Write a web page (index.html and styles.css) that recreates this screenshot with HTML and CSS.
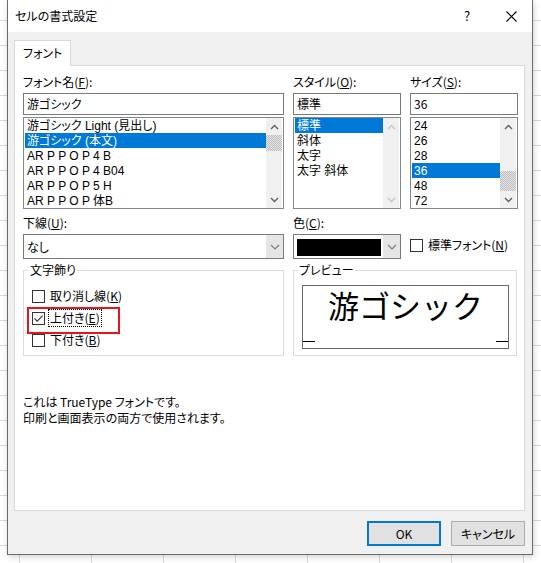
FILE: index.html
```html
<!DOCTYPE html>
<html lang="ja">
<head>
<meta charset="utf-8">
<title>セルの書式設定</title>
<link rel="stylesheet" href="styles.css">
</head>
<body>
<div class="dialog">
  <div class="titlebar">
    <span class="title">セルの書式設定</span>
    <span class="help">?</span>
    <span class="close"><svg width="11" height="11" viewBox="0 0 11 11"><path d="M0.5 0.5 L10.5 10.5 M10.5 0.5 L0.5 10.5" stroke="#000" stroke-width="1.1" fill="none"/></svg></span>
  </div>
  <div class="body">
    <div class="tabs"><div class="tab">フォント</div></div>
    <div class="panel">
      <div class="top">
        <div class="col">
          <div class="label">フォント名(<u>F</u>):</div>
          <div class="input">游ゴシック</div>
          <div class="list">
            <div class="items">
              <div class="item">游ゴシック Light (見出し)</div>
              <div class="item sel">游ゴシック (本文)</div>
              <div class="item">AR P P O P 4 B</div>
              <div class="item">AR P P O P 4 B04</div>
              <div class="item">AR P P O P 5 H</div>
              <div class="item">AR P P O P 体B</div>
            </div>
            <div class="sbar">
              <div class="arrow"><svg width="9" height="6" viewBox="0 0 9 6"><path d="M1 5 L4.5 1.5 L8 5" stroke="#606060" stroke-width="1.4" fill="none"/></svg></div>
              <div class="track"><div class="thumb thumb-top"></div></div>
              <div class="arrow"><svg width="9" height="6" viewBox="0 0 9 6"><path d="M1 1 L4.5 4.5 L8 1" stroke="#606060" stroke-width="1.4" fill="none"/></svg></div>
            </div>
          </div>
        </div>
        <div class="col">
          <div class="label">スタイル(<u>O</u>):</div>
          <div class="input">標準</div>
          <div class="list">
            <div class="items">
              <div class="item sel">標準</div>
              <div class="item">斜体</div>
              <div class="item">太字</div>
              <div class="item">太字 斜体</div>
            </div>
            <div class="sbar">
              <div class="arrow"><svg width="9" height="6" viewBox="0 0 9 6"><path d="M1 5 L4.5 1.5 L8 5" stroke="#c6c6c6" stroke-width="1.4" fill="none"/></svg></div>
              <div class="track"></div>
              <div class="arrow"><svg width="9" height="6" viewBox="0 0 9 6"><path d="M1 1 L4.5 4.5 L8 1" stroke="#c6c6c6" stroke-width="1.4" fill="none"/></svg></div>
            </div>
          </div>
        </div>
        <div class="col">
          <div class="label">サイズ(<u>S</u>):</div>
          <div class="input">36</div>
          <div class="list">
            <div class="items">
              <div class="item">24</div>
              <div class="item">26</div>
              <div class="item">28</div>
              <div class="item sel">36</div>
              <div class="item">48</div>
              <div class="item">72</div>
            </div>
            <div class="sbar">
              <div class="arrow"><svg width="9" height="6" viewBox="0 0 9 6"><path d="M1 5 L4.5 1.5 L8 5" stroke="#606060" stroke-width="1.4" fill="none"/></svg></div>
              <div class="track"><div class="thumb thumb-bottom"></div></div>
              <div class="arrow"><svg width="9" height="6" viewBox="0 0 9 6"><path d="M1 1 L4.5 4.5 L8 1" stroke="#606060" stroke-width="1.4" fill="none"/></svg></div>
            </div>
          </div>
        </div>
      </div>

      <div class="mid">
        <div class="col">
          <div class="label">下線(<u>U</u>):</div>
          <div class="combo">
            <span class="combo-text">なし</span>
            <span class="drop"><svg width="10" height="6" viewBox="0 0 10 6"><path d="M1 1 L5 5 L9 1" stroke="#7a7a7a" stroke-width="1.1" fill="none"/></svg></span>
          </div>
        </div>
        <div class="col">
          <div class="label">色(<u>C</u>):</div>
          <div class="combo">
            <span class="swatch"></span>
            <span class="drop"><svg width="10" height="6" viewBox="0 0 10 6"><path d="M1 1 L5 5 L9 1" stroke="#7a7a7a" stroke-width="1.1" fill="none"/></svg></span>
          </div>
        </div>
        <div class="col col-check">
          <div class="cb-row">
            <span class="box"></span>
            <span class="cb-label">標準フォント(<u>N</u>)</span>
          </div>
        </div>
      </div>

      <div class="groups">
        <fieldset class="group effects">
          <legend>文字飾り</legend>
          <div class="cb-row">
            <span class="box"></span>
            <span class="cb-label">取り消し線(<u>K</u>)</span>
          </div>
          <div class="cb-row marked">
            <span class="box"><svg width="11" height="11" viewBox="0 0 11 11"><path d="M1.5 5.5 L4.2 8.2 L9.6 2.6" stroke="#333" stroke-width="1.1" fill="none"/></svg></span>
            <span class="cb-label focus">上付き(<u>E</u>)</span>
          </div>
          <div class="cb-row">
            <span class="box"></span>
            <span class="cb-label">下付き(<u>B</u>)</span>
          </div>
        </fieldset>
        <fieldset class="group preview-group">
          <legend>プレビュー</legend>
          <div class="preview">
            <div class="preview-text">游ゴシック</div>
            <div class="marks"><span class="mark"></span><span class="mark"></span></div>
          </div>
        </fieldset>
      </div>

      <div class="info">
        <div>これは TrueType フォントです。</div>
        <div>印刷と画面表示の両方で使用されます。</div>
      </div>
    </div>
    <div class="buttons">
      <button class="btn default">OK</button>
      <button class="btn">キャンセル</button>
    </div>
  </div>
</div>
</body>
</html>
```

FILE: styles.css
```css
* { box-sizing: border-box; }

html, body { margin: 0; padding: 0; }

body {
  width: 541px;
  height: 563px;
  overflow: hidden;
  font-family: "Noto Sans CJK JP", "Noto Sans", sans-serif;
  font-size: 12px;
  font-feature-settings: "palt";
  color: #000;
  background-color: #fff;
  background-image:
    linear-gradient(#d9d9d9 1px, transparent 1px),
    linear-gradient(90deg, #d9d9d9 1px, transparent 1px);
  background-size: 100% 25px, 72px 100%;
  background-position: 0 20px, 19px 0;
}

.dialog {
  margin-left: 7px;
  width: 526px;
  height: 555px;
  border: 1px solid #6b6b6b;
  border-top: none;
  background: #f0f0f0;
  display: flex;
  flex-direction: column;
  box-shadow: 1px 2px 6px rgba(0, 0, 0, 0.18);
}

/* title bar */
.titlebar {
  height: 32px;
  flex: none;
  background: #fff;
  display: flex;
  align-items: center;
  padding-left: 7px;
}
.title { line-height: 16px; }
.help {
  margin-left: auto;
  width: 20px;
  text-align: center;
  font-size: 13px;
  line-height: 16px;
}
.close {
  width: 20px;
  height: 16px;
  margin-left: 24px;
  margin-right: 11px;
  display: flex;
  align-items: center;
  justify-content: center;
}

.body {
  flex: 1;
  padding: 8px 6px 0 6px;
}

/* tab */
.tabs { display: flex; height: 25px; }
.tab {
  width: 57px;
  height: 26px;
  border: 1px solid #d9d9d9;
  border-bottom: none;
  background: #fff;
  padding-left: 8px;
  line-height: 24px;
  position: relative;
  z-index: 1;
}

.panel {
  width: 511px;
  height: 446px;
  border: 1px solid #d9d9d9;
  background: #fff;
  padding: 8px 0 0 8px;
}

.label { height: 16px; line-height: 16px; white-space: nowrap; }
u { text-decoration-thickness: 1px; text-underline-offset: 1px; }

.top {
  display: grid;
  grid-template-columns: 261px 108px 108px;
  column-gap: 9px;
}

.input {
  margin-top: 3px;
  height: 22px;
  border: 1px solid #7a7a7a;
  padding-left: 3px;
  line-height: 20px;
}

.list {
  margin-top: 2px;
  height: 92px;
  border: 1px solid #828790;
  padding: 0 1px;
  display: flex;
}
.items { flex: 1; min-width: 0; }
.item {
  height: 15px;
  line-height: 15px;
  padding: 1px 0 0 2px;
  white-space: nowrap;
  overflow: hidden;
  font-family: "Liberation Sans", "Noto Sans CJK JP", sans-serif;
}
.item.sel { background: #0078d7; color: #fff; }

.sbar {
  width: 16px;
  background: #f0f0f0;
  display: flex;
  flex-direction: column;
}
.arrow {
  height: 17px;
  display: flex;
  align-items: center;
  justify-content: center;
}
.track { flex: 1; display: flex; flex-direction: column; }
.thumb {
  height: 16px;
  background-color: #f0f0f0;
  background-image: repeating-conic-gradient(#bdbdbd 0 25%, #e6e6e6 0 50%);
  background-size: 2px 2px;
}
.thumb-bottom { margin-top: auto; margin-bottom: 0; height: 20px; }

/* underline / colour row */
.mid {
  display: grid;
  grid-template-columns: 261px 108px 108px;
  column-gap: 9px;
  margin-top: 6px;
}
.combo {
  margin-top: 3px;
  height: 25px;
  border: 1px solid #7a7a7a;
  background: #fff;
  display: flex;
  align-items: stretch;
}
.combo-text { flex: 1; padding-left: 3px; line-height: 23px; }
.swatch {
  width: 84px;
  height: 17px;
  margin: 4px 2px 0 3px;
  background: #000;
}
.drop {
  width: 17px;
  margin-left: auto;
  background: #e5e5e5;
  display: flex;
  align-items: center;
  justify-content: center;
}
.col-check { display: flex; align-items: flex-end; padding-bottom: 6px; }

/* checkbox */
.cb-row {
  display: flex;
  align-items: center;
  height: 22px;
  position: relative;
}
.col-check .cb-row { height: 16px; }
.box {
  width: 13px;
  height: 13px;
  border: 1px solid #333;
  background: #fff;
  flex: none;
  display: flex;
  align-items: center;
  justify-content: center;
}
.cb-label {
  margin-left: 4px;
  padding: 0 1px;
  line-height: 16px;
  height: 16px;
  white-space: nowrap;
}
.cb-label.focus { outline: 1px dotted #000; }
.cb-row.marked::after {
  content: "";
  position: absolute;
  left: -5px;
  top: 0;
  width: 89px;
  height: 23px;
  border: 2px solid #e8131b;
}

/* group boxes */
.groups {
  display: grid;
  grid-template-columns: 261px 224px;
  column-gap: 9px;
  margin-top: 3px;
}
.group {
  margin: 0;
  min-width: 0;
  border: 1px solid #dcdcdc;
  height: 94px;
  padding: 7px 0 0 8px;
}
.group legend {
  padding: 0 1px;
  line-height: 16px;
  margin-left: -3px;
}
.preview-group legend { margin-left: -4px; }
.preview-group { padding-top: 7px; }

.preview {
  width: 207px;
  height: 64px;
  border: 1px solid #6a6a6a;
  background: #fff;
  display: flex;
  flex-direction: column;
  padding-top: 3px;
}
.preview-text {
  font-size: 31px;
  line-height: 31px;
  font-feature-settings: normal;
  text-align: center;
  white-space: nowrap;
}
.marks {
  margin-top: auto;
  margin-bottom: 6px;
  display: flex;
  justify-content: space-between;
}
.mark { width: 12px; height: 1px; background: #000; }

.info {
  margin-top: 38px;
  line-height: 16px;
}

/* buttons */
.buttons {
  display: flex;
  justify-content: flex-end;
  gap: 10px;
  margin-top: 10px;
  padding-right: 0;
  width: 511px;
}
.btn {
  width: 74px;
  height: 25px;
  border: 1px solid #adadad;
  background: #e1e1e1;
  font-family: inherit;
  font-size: 12px;
  font-feature-settings: "palt";
  color: #000;
  padding: 0;
}
.btn.default { border: 2px solid #0078d7; }
```
